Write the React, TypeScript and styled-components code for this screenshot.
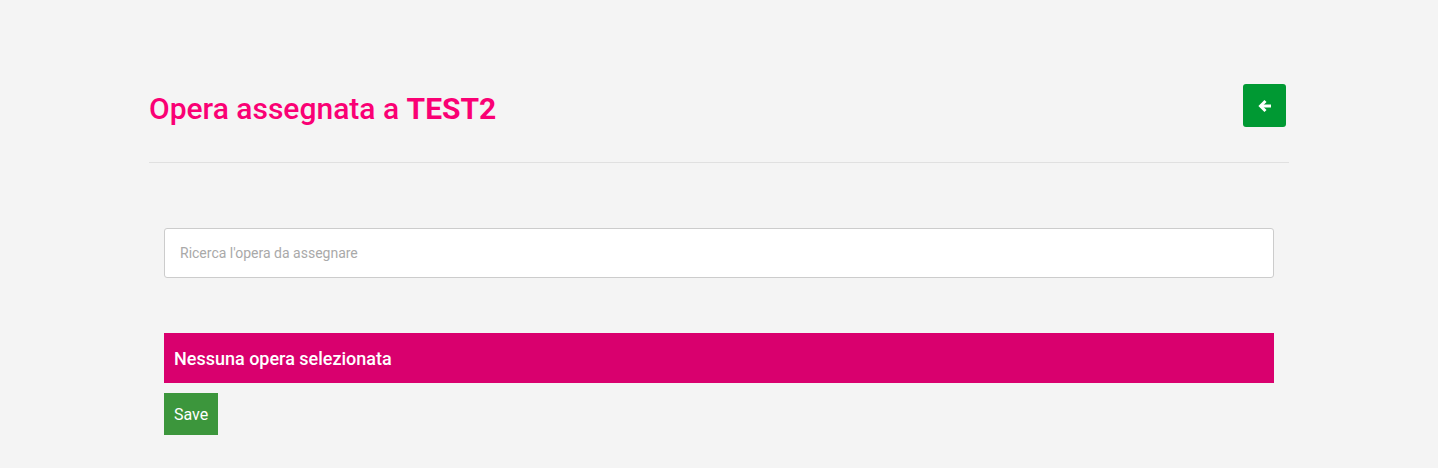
import { createGlobalStyle, styled } from 'styled-components';

const GlobalStyle = createGlobalStyle`
  html, body {
    margin: 0;
    padding: 0;
    background: #f4f4f4;
    font-family: Roboto, "Liberation Sans", Arial, sans-serif;
  }
  * { box-sizing: border-box; }
`;

const Page = styled.div`
  width: 1140px;
  margin: 0 auto;
  padding-top: 84px;
`;

const Header = styled.div`
  display: flex;
  align-items: center;
  justify-content: space-between;
  padding-right: 3px;
  height: 43px;
`;

const Title = styled.h1`
  margin: 5px 0 0;
  font-size: 30px;
  font-weight: 500;
  color: #fa0074;
  b { font-weight: 700; }
`;

const BackButton = styled.button`
  width: 43px;
  height: 43px;
  border: none;
  border-radius: 3px;
  background: #009933;
  color: #fff;
  display: flex;
  align-items: center;
  justify-content: center;
  cursor: pointer;
  padding: 0;
`;

const Divider = styled.hr`
  margin: 35px 0 0;
  border: none;
  border-top: 1px solid #e0e0e0;
`;

const Body = styled.div`
  padding: 65px 15px 0;
`;

const SearchInput = styled.input`
  display: block;
  width: 100%;
  height: 50px;
  border: 1px solid #cccccc;
  border-radius: 3px;
  background: #fff;
  padding: 0 15px;
  font-family: inherit;
  font-size: 14px;
  color: #333;
  outline: none;
  &::placeholder { color: #a9a9a9; }
`;

const EmptyBar = styled.div`
  margin-top: 55px;
  height: 50px;
  background: #d9006e;
  color: #fff;
  font-size: 18px;
  font-weight: 500;
  display: flex;
  align-items: center;
  padding: 0 10px;
`;

const SaveButton = styled.button`
  margin-top: 10px;
  height: 42px;
  padding: 0 10px;
  border: none;
  background: #3c963c;
  color: #fff;
  font-family: inherit;
  font-size: 16px;
  cursor: pointer;
`;

const ArrowLeft = () => (
  <svg width="14" height="14" viewBox="0 0 14 14" fill="none" stroke="currentColor" strokeWidth="3" strokeLinejoin="miter">
    <path d="M7.5 2 L2.5 7 L7.5 12" />
    <path d="M2.5 7 H13" />
  </svg>
);

export default function App() {
  return (
    <>
      <GlobalStyle />
      <Page>
        <Header>
          <Title>
            Opera assegnata a <b>TEST2</b>
          </Title>
          <BackButton aria-label="Indietro">
            <ArrowLeft />
          </BackButton>
        </Header>
        <Divider />
        <Body>
          <SearchInput placeholder="Ricerca l'opera da assegnare" />
          <EmptyBar>Nessuna opera selezionata</EmptyBar>
          <SaveButton>Save</SaveButton>
        </Body>
      </Page>
    </>
  );
}
